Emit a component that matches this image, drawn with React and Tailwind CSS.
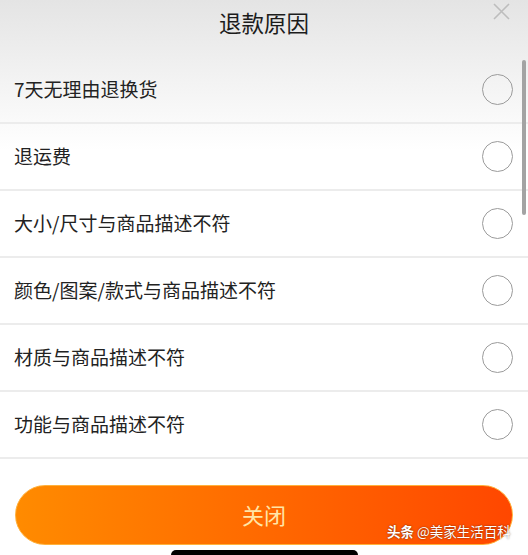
import React from 'react'

const reasons = [
  '7天无理由退换货',
  '退运费',
  '大小/尺寸与商品描述不符',
  '颜色/图案/款式与商品描述不符',
  '材质与商品描述不符',
  '功能与商品描述不符',
]

const font = { fontFamily: '"Noto Sans CJK SC", "Noto Sans", sans-serif' }

const App = () => {
  return (
    <div
      className="relative w-[528px] h-[555px] overflow-hidden flex flex-col bg-[linear-gradient(to_bottom,#e4e4e4_0px,#f1f1f1_70px,#ffffff_150px)] text-[#222]"
      style={font}
    >
      <header className="h-[57px] shrink-0 flex items-center justify-center pb-[12px]">
        <h1 className="text-[22.5px] leading-none text-[#1c1c1c]">退款原因</h1>
      </header>

      {/* close icon */}
      <button className="absolute top-[3px] right-[18px] w-[17px] h-[17px] text-[#bdbdbd]">
        <svg viewBox="0 0 17 17" className="w-full h-full" fill="none" stroke="currentColor" strokeWidth="1.6">
          <path d="M1 1 L16 16 M16 1 L1 16" />
        </svg>
      </button>

      {/* scroll bar */}
      <div className="absolute top-[60px] right-[2px] w-[4px] h-[155px] rounded-full bg-[#a3a3a3]" />

      <ul className="shrink-0">
        {reasons.map((r) => (
          <li
            key={r}
            className="h-[67px] border-b-2 border-[#ececec] flex items-center justify-between pl-[14px] pr-[15px]"
          >
            <span className="text-[19px] leading-none pb-[3px]">{r}</span>
            <span className="w-[31px] h-[31px] rounded-full border-[1.5px] border-[#9b9b9b]" />
          </li>
        ))}
      </ul>

      <button className="mt-[26px] mx-[15px] h-[60px] shrink-0 rounded-full bg-[linear-gradient(to_right,#ff8b00,#ff4700)] border border-[#ffb13b] text-[#ffe6a8] text-[22px] pb-[2px]">
        关闭
      </button>

      <div className="mt-[5px] mx-auto w-[187px] h-[10px] shrink-0 rounded-full bg-black" />

      <div className="absolute left-[387px] top-[525px] text-white text-[13.5px] leading-none whitespace-nowrap [text-shadow:0_0_2px_rgba(0,0,0,0.6)]">
        <span className="font-bold">头条</span> @美家生活百科
      </div>
    </div>
  )
}

export default App
